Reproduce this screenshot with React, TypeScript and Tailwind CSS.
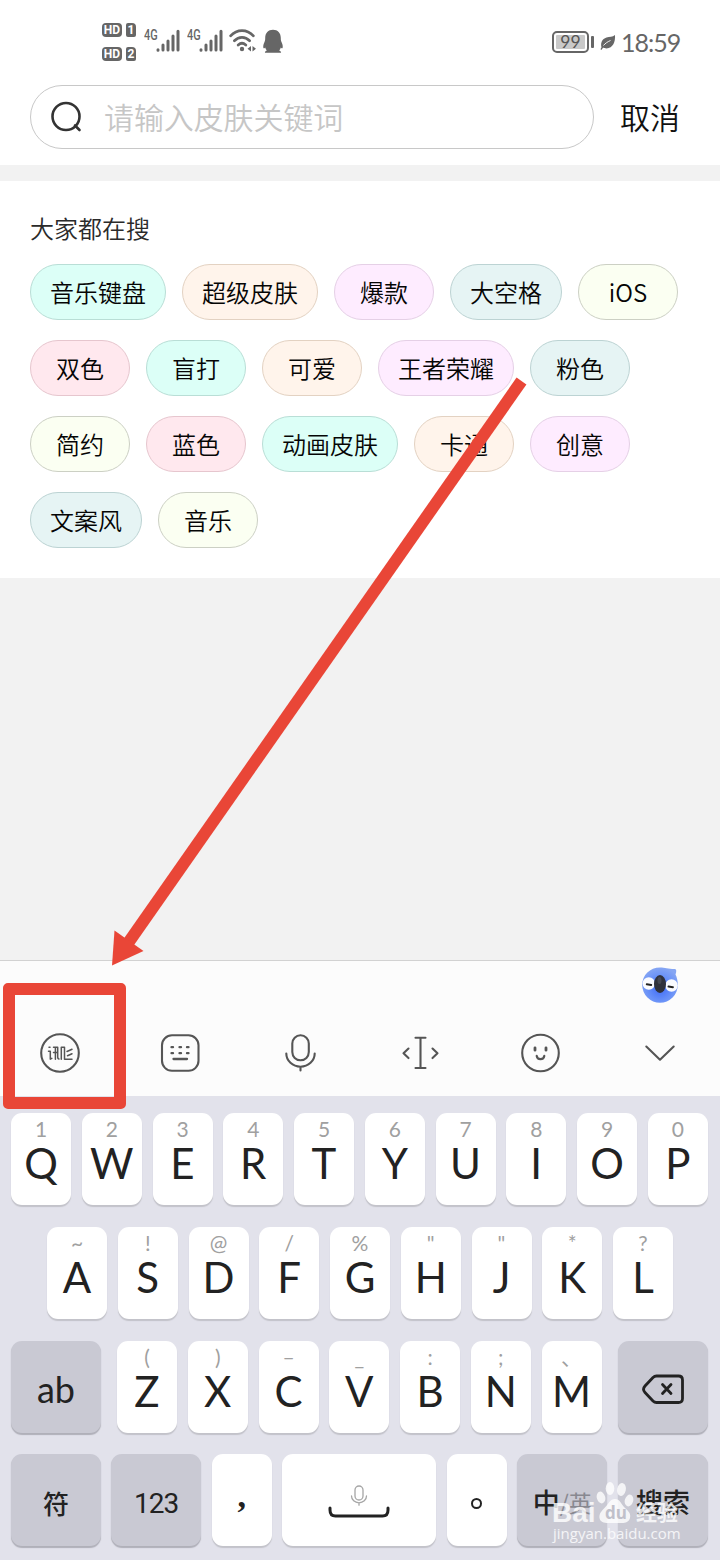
import React from "react";

const CJK = "font-['Noto_Sans_CJK_SC',sans-serif]";

type Tone = "mint" | "peach" | "pink" | "teal" | "cream" | "rose";

const tones: Record<Tone, string> = {
  mint: "bg-[#dcfff7] border-[#b9ded6]",
  peach: "bg-[#fff4eb] border-[#e3d2c2]",
  pink: "bg-[#feecff] border-[#e5d0e6]",
  teal: "bg-[#e6f4f4] border-[#bcd3d3]",
  cream: "bg-[#fbfff2] border-[#ccd0c4]",
  rose: "bg-[#ffe8ee] border-[#e6c6ce]",
};

const tagRows: [string, Tone, string][][] = [
  [
    ["音乐键盘", "mint", "w-[136px]"],
    ["超级皮肤", "peach", "w-[136px]"],
    ["爆款", "pink", "w-[100px]"],
    ["大空格", "teal", "w-[112px]"],
    ["iOS", "cream", "w-[100px]"],
  ],
  [
    ["双色", "rose", "w-[100px]"],
    ["盲打", "mint", "w-[100px]"],
    ["可爱", "peach", "w-[100px]"],
    ["王者荣耀", "pink", "w-[136px]"],
    ["粉色", "teal", "w-[100px]"],
  ],
  [
    ["简约", "cream", "w-[100px]"],
    ["蓝色", "rose", "w-[100px]"],
    ["动画皮肤", "mint", "w-[136px]"],
    ["卡通", "peach", "w-[100px]"],
    ["创意", "pink", "w-[100px]"],
  ],
  [
    ["文案风", "teal", "w-[112px]"],
    ["音乐", "cream", "w-[100px]"],
  ],
];

function HdBadge({ n }: { n: string }) {
  return (
    <div className="flex h-[15px] items-center gap-[4px] font-['Roboto',sans-serif] text-[12px] leading-[14px] font-bold text-white">
      <span className="flex h-[14px] w-[20px] items-center justify-center rounded-[4px] bg-[#666] pt-[1px]">HD</span>
      <span className="flex h-[14px] w-[10px] items-center justify-center rounded-[2px] rounded-tr-[4px] bg-[#666] pt-[1px]">{n}</span>
    </div>
  );
}

function Signal() {
  return (
    <div className="flex h-[26px] w-[37px] items-start">
      <span className="w-[12px] origin-left scale-x-[0.78] font-['Roboto',sans-serif] text-[14px] leading-[14px] font-medium text-[#666]">4G</span>
      <svg className="mt-[1px] h-[24px] w-[25px]" viewBox="0 0 25 24" stroke="#666" strokeWidth="3" strokeLinecap="round">
        <path d="M2 20.8v.4M7 16v5M12 12v9M17 7v14M22 2.2V21" />
      </svg>
    </div>
  );
}

function StatusBar() {
  return (
    <div className="flex h-[85px] items-start pt-[22px] pl-[102px] text-[#666]">
      <div className="flex flex-col gap-[9px]">
        <HdBadge n="1" />
        <HdBadge n="2" />
      </div>
      <div className="mt-[6px] ml-[8px] flex gap-[6px]">
        <Signal />
        <Signal />
      </div>
      <svg className="mt-[6px] ml-[5px] h-[26px] w-[28px]" viewBox="0 0 28 26" fill="none" stroke="#666" strokeWidth="2.700" strokeLinecap="round">
        <path d="M1.600 7.800C8 .8 18 .8 24.400 7.800M5.400 12.700c4.400-4.500 10.800-4.500 15.200 0M9.200 17c2.300-2.100 5.300-2.100 7.600 0" />
        <circle cx="13" cy="21" r="2.200" fill="#666" stroke="none" />
        <path d="M22 18v5.500l-3.500-2.700zM23.500 18v5.500l3.500-2.700z" fill="#666" stroke="none" />
      </svg>
      <svg className="mt-[7px] ml-[5px] h-[25px] w-[22px]" viewBox="0 0 22 25" fill="#666">
        <path d="M11 .8c4.800 0 7.800 3.300 7.800 8.200 0 1.800.1 2.800.9 4.400 1 2 1.300 4 .9 5.600-.4.700-1.100.2-1.800-.6-.3 1.300-.9 2.300-1.700 3.100 1.100.4 2 1 2 2.300H2.900c0-1.300.9-1.900 2-2.300-.8-.8-1.400-1.800-1.700-3.100-.7.8-1.400 1.300-1.800.6-.4-1.600-.1-3.600.9-5.600.8-1.600.9-2.600.9-4.400C3.200 4.100 6.200.8 11 .8z" />
      </svg>
      <div className="mt-[9px] ml-[268px] flex h-[22px] w-[37px] items-center justify-center rounded-[5px] border-2 border-[#666] p-[2px]">
        <span className="flex h-[14px] w-full items-center justify-center rounded-[1px] bg-[#c9c9c9] pb-[1px] font-['Lato',sans-serif] text-[17.500px] leading-[14px] text-[#555]">99</span>
      </div>
      <div className="mt-[14px] ml-[2px] h-[12px] w-[3px] rounded-[1px] bg-[#666]" />
      <svg className="mt-[12px] ml-[6px] h-[17px] w-[16px]" viewBox="0 0 16 17">
        <path d="M15 1c.5 7-2 13-8.500 13.500-1.500 0-2.500-.3-3.300-.9L1.300 16l-.8-.8 1-2C.4 9 2 5 6.500 3.500 9.500 2.800 12.500 3 15 1z" fill="#666" />
        <path d="M3.500 11.500C5 9.500 7.500 7.800 10.500 6.500" fill="none" stroke="#fff" strokeWidth="0.900" />
      </svg>
      <span className="mt-[6px] ml-[5px] font-['Lato',sans-serif] text-[25px] leading-[28px] tracking-[-1px]">18:59</span>
    </div>
  );
}

function SearchRow() {
  return (
    <div className="flex h-[80px] items-start pl-[30px]">
      <div className="flex h-[64px] w-[564px] items-center rounded-full border border-[#c8c8c8] pl-[19px]">
        <svg className="h-[34px] w-[34px]" viewBox="0 0 34 34" fill="none" stroke="#333" strokeWidth="2.600" strokeLinecap="round">
          <circle cx="16" cy="16.500" r="13.500" />
          <path d="M25 25.500l4.500 4.500" />
        </svg>
        <span className="ml-[20px] pb-[3px] text-[30px] leading-[40px] font-[350] tracking-[-0.1px] text-[#c6c6c6]">请输入皮肤关键词</span>
      </div>
      <span className="mt-[11px] ml-[26px] text-[30px] leading-[40px] font-[350] text-[#111]">取消</span>
    </div>
  );
}

function Tags() {
  return (
    <div className="h-[397px] bg-white pt-[32px] pl-[30px]">
      <div className="h-[30px] text-[24px] leading-[30px] font-[350] text-[#2a2a2a]">大家都在搜</div>
      <div className="mt-[21px] flex flex-col gap-[20px]">
        {tagRows.map((row, i) => (
          <div key={i} className="flex gap-[16px]">
            {row.map(([label, tone, width]) => (
              <span key={label} className={`flex h-[56px] items-center justify-center rounded-full border text-[24px] leading-[30px] font-[350] text-[#050505] ${width} ${tones[tone]}`}>
                {label}
              </span>
            ))}
          </div>
        ))}
      </div>
    </div>
  );
}

function Mascot() {
  return (
    <svg className="absolute top-[5px] right-[41px] h-[38px] w-[38px]" viewBox="0 0 38 38">
      <defs>
        <radialGradient id="face" cx="0.5" cy="0.6" r="0.6">
          <stop offset="0" stopColor="#3f6cf5" />
          <stop offset="0.6" stopColor="#6a92f8" />
          <stop offset="1" stopColor="#86a6f3" />
        </radialGradient>
      </defs>
      <path d="M19 1.500c5 0 8 1.500 14.500 1.500 2 0 2.300 2 1 5.500 1.500 3 2.300 6.500 2.300 10.500a17.800 17.800 0 1 1-35.600 0C1.200 9 9 1.500 19 1.500z" fill="url(#face)" />
      <circle cx="7.800" cy="17.500" r="6.200" fill="#fafbff" />
      <circle cx="30.500" cy="19.500" r="6.200" fill="#fafbff" />
      <path d="M5.800 18.300l4.400.6M27.500 20.600l4.400.6" stroke="#222" strokeWidth="2" strokeLinecap="round" />
      <ellipse cx="19" cy="18" rx="6" ry="9" fill="#30323c" />
      <ellipse cx="18.500" cy="14.500" rx="2" ry="3.500" fill="#454852" />
    </svg>
  );
}

const iconProps = {
  className: "h-[44px] w-[44px]",
  viewBox: "0 0 44 44",
  fill: "none",
  stroke: "#555",
  strokeWidth: 2.1,
  strokeLinecap: "round" as const,
  strokeLinejoin: "round" as const,
};

function Toolbar() {
  return (
    <div className="relative flex h-[136px] items-end border-t border-[#d2d2d2] bg-[#fcfcfc] pb-[21px]">
      <Mascot />
      <div className="grid w-full grid-cols-6 justify-items-center">
        <svg {...iconProps}>
          <circle cx="22" cy="22" r="18.800" />
          <path d="M11 16.300h1M10.500 20.200h1.800v8M12.300 28.200l1.500-.8M15.500 16.300h4.200v9.500c0 1.300.4 2.200 1.300 2.200M17.400 16.500v11.700M15.500 21.500h3.500M23.300 16.300v11.900M23.300 16.300h3.200v11.900h7.500M29 20.500l5-2.300M29.500 24.800l4.500-2" strokeWidth="1.500" />
        </svg>
        <svg {...iconProps}>
          <rect x="4" y="4.300" width="36.500" height="35.500" rx="10" />
          <path d="M13.500 16.200h1.500M21.500 16.200h1.500M29 16.200h1.500M13.500 22.200h1.500M21.500 22.200h1.500M29 22.200h1.500M15.500 28h13.500" strokeWidth="2.300" />
        </svg>
        <svg {...iconProps}>
          <rect x="14.300" y="4.300" width="16.500" height="25" rx="8.200" />
          <path d="M8.300 22.500a14.200 13.200 0 0 0 28.400 0M22.500 35.800v3.700" />
        </svg>
        <svg {...iconProps}>
          <path d="M22.500 7v30M17.500 6.800h10M17.500 37h10M10.500 17.500l-5 4.800 5 4.800M34.500 17.500l5 4.800-5 4.800" />
        </svg>
        <svg {...iconProps}>
          <circle cx="22.500" cy="22" r="18.300" />
          <path d="M17 16.800v2.400M28 16.800v2.400" strokeWidth="2.800" />
          <path d="M18.700 24.800c.6 4.400 7 4.400 7.600 0" strokeWidth="2.200" />
        </svg>
        <svg {...iconProps}>
          <path d="M8.300 15.500L22 28.700l13.700-13.200" />
        </svg>
      </div>
    </div>
  );
}

const face = "flex h-[92px] shrink-0 rounded-[11px]";
const light = "w-[60px] bg-white shadow-[0_2px_1px_#c3c3ca]";
const dark = "w-[90px] bg-[#c9c9d3] shadow-[0_1.500px_1px_#b0b0b9]";

function LetterKey({ top, main }: { top: string; main: string }) {
  return (
    <div className={`${face} ${light} flex-col items-center font-['Lato','Noto_Sans_CJK_SC',sans-serif]`}>
      <span className="h-[29px] pt-[5px] text-[21px] leading-[22px] text-[#a0a0a0]">{top}</span>
      <span className="text-[42px] leading-[42px] text-[#222]">{main}</span>
    </div>
  );
}

function Keys({ tops, mains }: { tops: string[]; mains: string }) {
  return (
    <>
      {mains.split("").map((m, i) => (
        <LetterKey key={m} top={tops[i]} main={m} />
      ))}
    </>
  );
}

function MicSmall() {
  return (
    <svg className="h-[24px] w-[22px]" viewBox="0 0 22 24" fill="none" stroke="#a5a5a5" strokeWidth="1.300" strokeLinecap="round">
      <rect x="7" y="2" width="8" height="14" rx="4" />
      <path d="M3.500 12a7.500 6.800 0 0 0 15 0M11 18.800v2.400" />
    </svg>
  );
}

function Keyboard() {
  return (
    <div className="flex h-[464px] flex-col gap-[21.700px] bg-[#e2e2eb] pt-[17.200px]">
      <div className="flex gap-[10.750px] pl-[11px]">
        <Keys tops={"1234567890".split("")} mains="QWERTYUIOP" />
      </div>
      <div className="flex gap-[10.750px] pl-[47px]">
        <Keys tops={["~", "!", "@", "/", "%", '"', '"', "*", "?"]} mains="ASDFGHJKL" />
      </div>
      <div className="flex pl-[11px]">
        <div className={`${face} ${dark} items-center justify-center pt-[4px] font-['Lato',sans-serif] text-[36px] text-[#222]`}>ab</div>
        <div className="mx-[16px] flex gap-[10.750px]">
          <Keys tops={["(", ")", "–", "_", ":", ";", "、"]} mains="ZXCVBNM" />
        </div>
        <div className={`${face} ${dark} items-center justify-center pt-[4px]`}>
          <svg className="h-[32px] w-[44px]" viewBox="0 0 44 32" fill="none" stroke="#222" strokeWidth="2.800" strokeLinecap="round" strokeLinejoin="round">
            <path d="M15.500 3h22c2.500 0 4 1.500 4 4v18.500c0 2.500-1.500 4-4 4h-22c-1.500 0-2.500-.5-3.500-1.500l-8-8.500c-2-2.200-2-4.300 0-6.500l8-8.500c1-1 2-1.500 3.500-1.500z" />
            <path d="M21.500 11.500l8.500 9M30 11.500l-8.500 9" />
          </svg>
        </div>
      </div>
      <div className="flex gap-[10.700px] pl-[11px] text-[#222]">
        <div className={`${face} ${dark} -mr-[0.600px] items-center justify-center pt-[4px] text-[26px] font-medium`}>符</div>
        <div className={`${face} ${dark} items-center justify-center pt-[8px] font-['Roboto',sans-serif] text-[28px] tracking-[-1px]`}>123</div>
        <div className={`${face} ${light} items-center justify-center pb-[10px] font-['Liberation_Serif',serif] text-[34px] font-bold`}>,</div>
        <div className={`${face} w-[153.500px] flex-col items-center bg-white pt-[30px] shadow-[0_2px_1px_#c3c3ca]`}>
          <MicSmall />
          <svg className="mt-[-2px] h-[13px] w-[64px]" viewBox="0 0 64 13" fill="none" stroke="#222" strokeWidth="3" strokeLinecap="round">
            <path d="M3 2v2c0 4 1.500 6 5.500 6h47c4 0 5.500-2 5.500-6V2" />
          </svg>
        </div>
        <div className={`${face} ${light} items-center justify-center pt-[6px]`}>
          <span className="h-[11px] w-[11px] rounded-full border-2 border-[#222]" />
        </div>
        <div className={`${face} ${dark} items-center justify-center pt-[4px] text-[27px] font-medium`}>
          中<span className="text-[23px] font-normal text-[#888890]">/英</span>
        </div>
        <div className={`${face} ${dark} items-center justify-center pt-[4px] text-[27px] font-medium`}>搜索</div>
      </div>
    </div>
  );
}

function Watermark() {
  return (
    <div className="absolute top-[1480px] left-[552px] flex w-[130px] flex-col text-white/80">
      <div className="flex h-[44px] items-end">
        <span className="-mb-[3px] w-[44px] font-['Liberation_Sans',sans-serif] text-[28px] leading-[28px] font-bold">Bai</span>
        <div className="relative h-[44px] w-[38px]">
          <svg className="h-[44px] w-[38px]" viewBox="0 0 38 44" fill="#fff" fillOpacity="0.8">
            <ellipse cx="5" cy="17.500" rx="4.200" ry="6" transform="rotate(-15 5 17.500)" />
            <ellipse cx="14" cy="8.500" rx="4.300" ry="6.500" />
            <ellipse cx="25.500" cy="9.500" rx="4.300" ry="6.500" transform="rotate(12 25.500 9.500)" />
            <ellipse cx="33" cy="20.500" rx="4.200" ry="6" transform="rotate(15 33 20.500)" />
            <path d="M19 19c5 0 6 5 10 9 4 3.500 6 6 5 10-1 4-4.500 5-8 5H12c-4 0-8-1-8.500-5-.5-4 1.500-6.500 5-10 4-4 5.500-9 10.500-9z" />
          </svg>
          <span className="absolute top-[23px] left-[9px] font-['Open_Sans',sans-serif] text-[17px] leading-[20px] font-bold text-[#c0c0ca]">du</span>
        </div>
        <span className="ml-[2px] text-[21px] leading-[26px] font-bold">经验</span>
      </div>
      <span className="pl-[1px] font-['Open_Sans',sans-serif] text-[15px] leading-[18px] tracking-[0px]">jingyan.baidu.com</span>
    </div>
  );
}

export default function App() {
  return (
    <div className={`relative flex h-[1560px] w-[720px] flex-col overflow-hidden bg-white ${CJK}`}>
      <StatusBar />
      <SearchRow />
      <div className="h-[16px] bg-[#f2f2f2]" />
      <Tags />
      <div className="h-[382px] bg-[#f2f2f2]" />
      <Toolbar />
      <Keyboard />
      <Watermark />
      <div className="absolute top-[983px] left-[3px] h-[126px] w-[123px] rounded-[5px] border-[12px] border-[#e94637]" />
      <svg className="pointer-events-none absolute top-0 left-0 h-[1560px] w-[720px]" viewBox="0 0 720 1560">
        <path d="M521.500 381L126 946" stroke="#e94637" strokeWidth="12" />
        <path d="M112 965.500l2.500-35 29 20.500z" fill="#e94637" />
      </svg>
    </div>
  );
}
